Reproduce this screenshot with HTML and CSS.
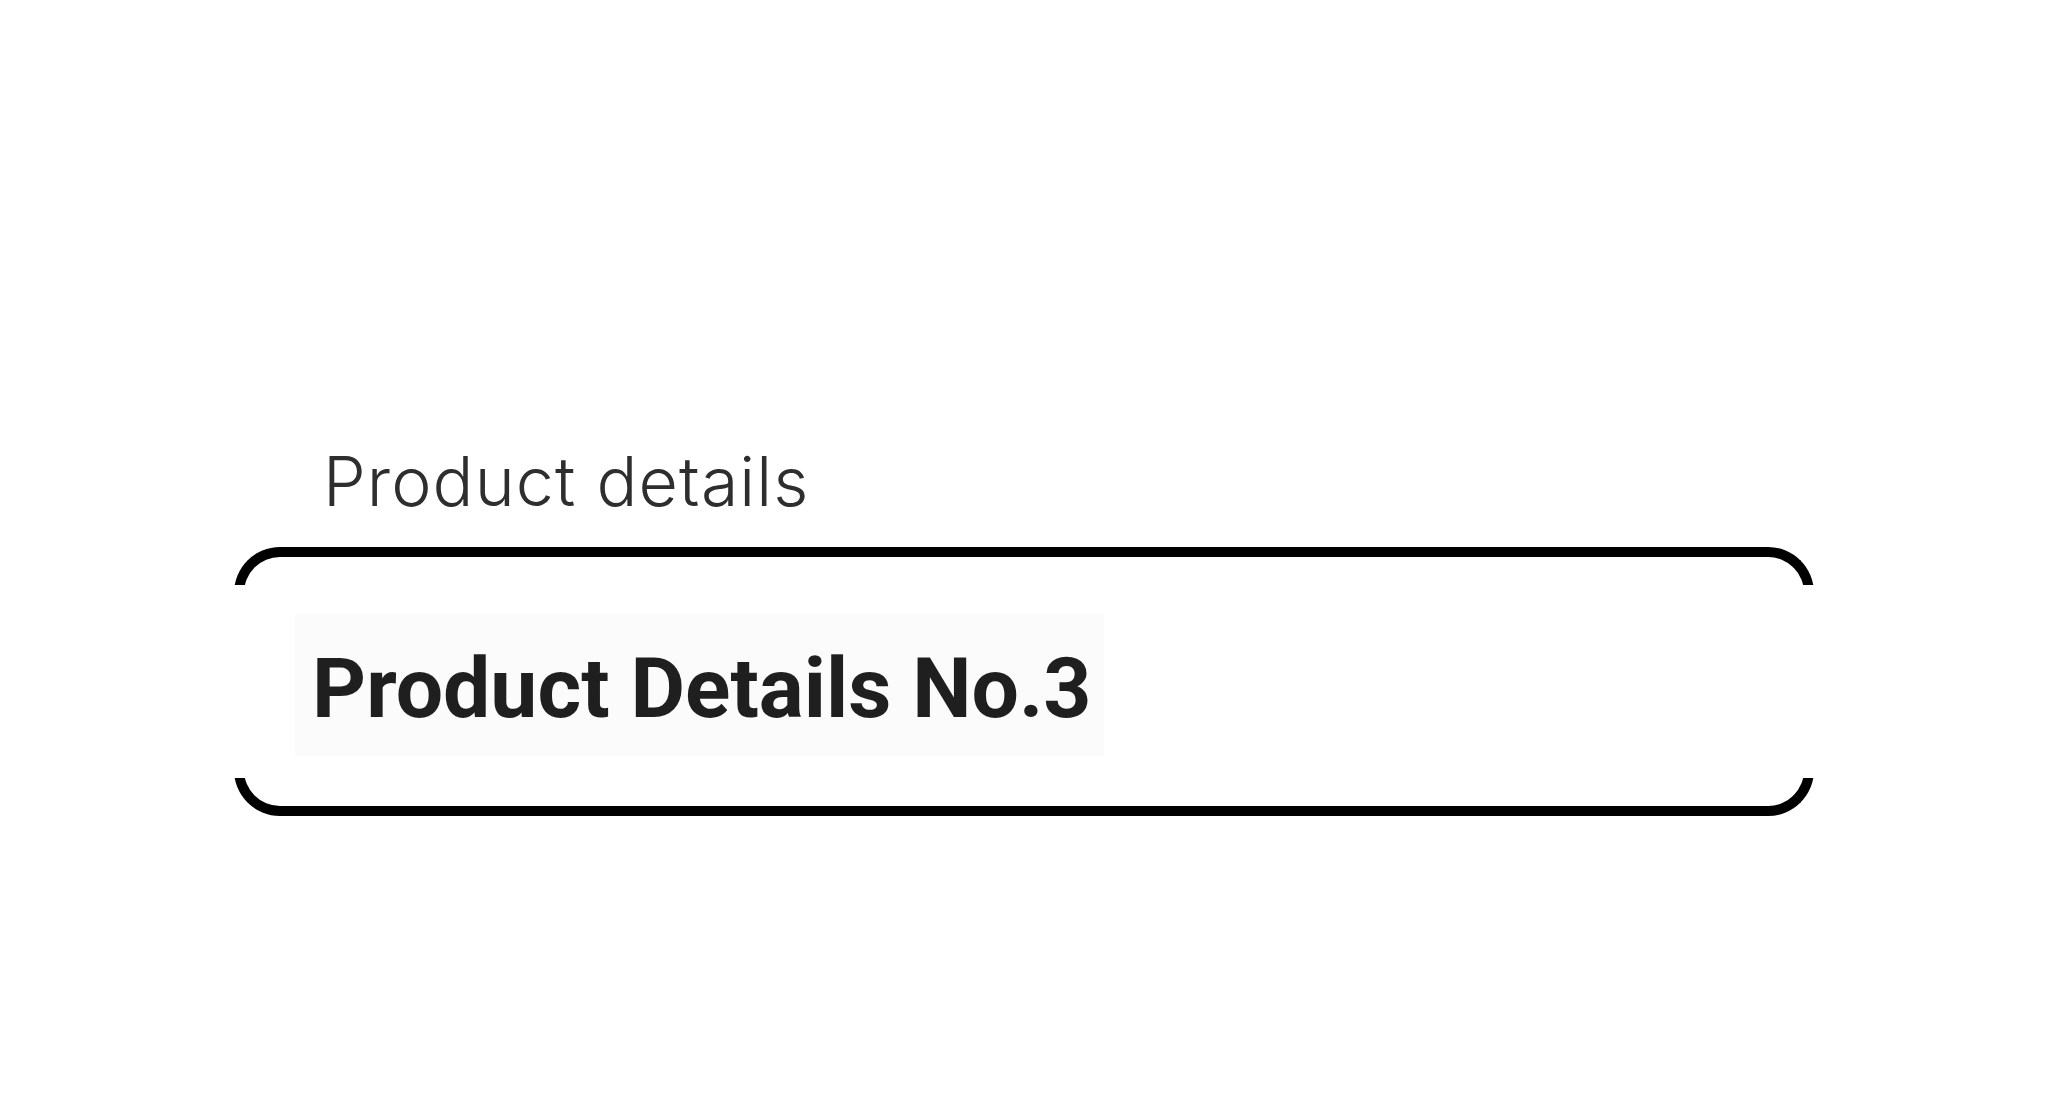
FILE: index.html
```html
<!DOCTYPE html>
<html lang="en">
<head>
    <meta charset="UTF-8">
    <meta name="viewport" content="width=device-width, initial-scale=1.0">
    <title>Product details</title>
    <link rel="stylesheet" href="styles.css">
</head>
<body>
    <section class="details">
        <h2 class="label">Product details</h2>
        <div class="frame">
            <div class="bracket bracket-top"><span></span></div>
            <div class="frame-body">
                <h1 class="title">Product Details No.3</h1>
            </div>
            <div class="bracket bracket-bottom"><span></span></div>
        </div>
    </section>
</body>
</html>
```

FILE: styles.css
```css
body {
    margin: 0;
    padding: 0;
    background: #fff;
    font-family: 'Roboto', 'Liberation Sans', sans-serif;
}

.details {
    width: 1580px;
    margin: 0 auto;
    padding-top: 431px;
}

.label {
    margin: 0 0 0 89px;
    font-family: 'Inter', 'Noto Sans', sans-serif;
    font-weight: 300;
    font-size: 68px;
    letter-spacing: 1.1px;
    line-height: 100px;
    color: #2e2e2e;
}

.frame {
    margin-top: 16px;
}

.bracket {
    height: 38px;
    overflow: hidden;
    position: relative;
}

.bracket span {
    display: block;
    height: 100px;
    box-sizing: border-box;
    border: 10px solid #000;
}

.bracket-top span {
    border-bottom: none;
    border-radius: 46px 46px 0 0;
}

.bracket-bottom span {
    border-top: none;
    border-radius: 0 0 46px 46px;
    margin-top: -62px;
}

.frame-body {
    padding: 29px 0 22px 61px;
}

.title {
    display: inline-block;
    margin: 0;
    padding: 7px 12px 0 17px;
    height: 135px;
    line-height: 135px;
    background: #fbfbfb;
    font-family: 'Roboto', sans-serif;
    font-weight: 700;
    font-size: 84px;
    color: #1f1f1f;
}
```
